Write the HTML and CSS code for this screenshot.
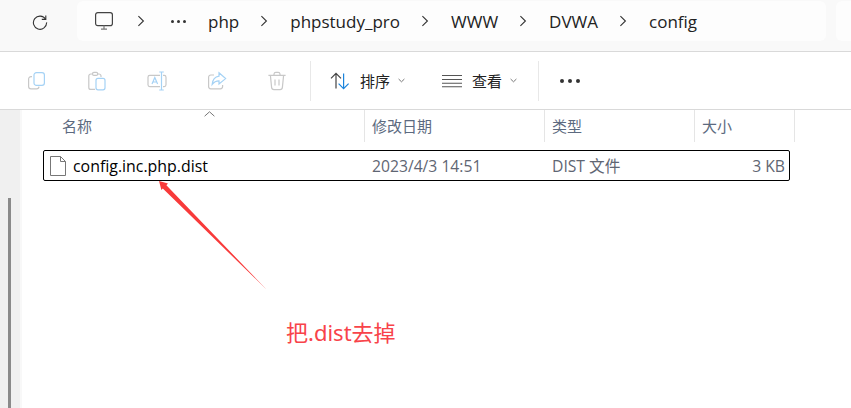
FILE: index.html
```html
<!DOCTYPE html>
<html lang="en">

<head>
    <meta charset="UTF-8">
    <meta name="viewport" content="width=device-width, initial-scale=1.0">
    <title>config</title>
    <link rel="stylesheet" href="styles.css">
</head>

<body>

    <div class="window">
        <div class="topbar">
            <div class="refresh">
                <svg width="16" height="16" viewBox="0 0 16 16" fill="none" stroke="#333" stroke-width="1.1">
                    <path d="M13.6 5.2A6.6 6.6 0 1 0 14.6 8.4"/>
                    <path d="M13.8 1.4V5.4H9.8"/>
                </svg>
            </div>
            <div class="address">
                <svg class="pc-icon" width="20" height="20" viewBox="0 0 20 20" fill="none" stroke="#444" stroke-width="1.2">
                    <rect x="1.6" y="1.6" width="16.8" height="13" rx="2.2"/>
                    <path d="M7 18.2H13M10 14.6V18.2" stroke="#777"/>
                </svg>
                <svg class="sep sep-first" width="8" height="12" viewBox="0 0 8 12" fill="none" stroke="#333" stroke-width="1.1"><path d="M1.4 1.2L6.4 6L1.4 10.8"/></svg>
                <div class="dots"><i></i><i></i><i></i></div>
                <span class="crumb">php</span>
                <svg class="sep" width="8" height="12" viewBox="0 0 8 12" fill="none" stroke="#333" stroke-width="1.1"><path d="M1.4 1.2L6.4 6L1.4 10.8"/></svg>
                <span class="crumb">phpstudy_pro</span>
                <svg class="sep" width="8" height="12" viewBox="0 0 8 12" fill="none" stroke="#333" stroke-width="1.1"><path d="M1.4 1.2L6.4 6L1.4 10.8"/></svg>
                <span class="crumb">WWW</span>
                <svg class="sep" width="8" height="12" viewBox="0 0 8 12" fill="none" stroke="#333" stroke-width="1.1"><path d="M1.4 1.2L6.4 6L1.4 10.8"/></svg>
                <span class="crumb">DVWA</span>
                <svg class="sep" width="8" height="12" viewBox="0 0 8 12" fill="none" stroke="#333" stroke-width="1.1"><path d="M1.4 1.2L6.4 6L1.4 10.8"/></svg>
                <span class="crumb">config</span>
            </div>
            <div class="search"></div>
        </div>

        <div class="toolbar">
            <div class="tool-icons">
                <svg width="20" height="20" viewBox="0 0 20 20" fill="none" stroke-width="1.2">
                    <path d="M5 5.6H4A2.4 2.4 0 0 0 1.6 8V15.4A2.4 2.4 0 0 0 4 17.8H9.6A2.4 2.4 0 0 0 12 15.6" stroke="#c8c8c8"/>
                    <rect x="7" y="1.6" width="10.4" height="12.8" rx="2.4" stroke="#a5d2f5"/>
                </svg>
                <svg width="20" height="20" viewBox="0 0 20 20" fill="none" stroke-width="1.2">
                    <path d="M6 3H3.8A2 2 0 0 0 1.8 5V16.4A2 2 0 0 0 3.8 18.4H8M14 6V5A2 2 0 0 0 12 3H10" stroke="#c8c8c8"/>
                    <rect x="5.6" y="1.4" width="5" height="3" rx="1.2" stroke="#c8c8c8"/>
                    <rect x="9" y="7.4" width="9" height="11.4" rx="2" stroke="#a5d2f5"/>
                </svg>
                <svg width="20" height="20" viewBox="0 0 20 20" fill="none" stroke-width="1.2">
                    <path d="M13 4.4H2.8A1.8 1.8 0 0 0 1 6.2V13.8A1.8 1.8 0 0 0 2.8 15.6H13M16 4.4H17.2A1.8 1.8 0 0 1 19 6.2V13.8A1.8 1.8 0 0 1 17.2 15.6H16" stroke="#c8c8c8"/>
                    <path d="M12.2 1H16.8M14.5 1V19M12.2 19H16.8M5 13L7.8 6.6L10.6 13M6 11H9.6" stroke="#a5d2f5"/>
                </svg>
                <svg width="20" height="20" viewBox="0 0 20 20" fill="none" stroke-width="1.2">
                    <path d="M7 4H3.8A2.2 2.2 0 0 0 1.6 6.2V15.6A2.2 2.2 0 0 0 3.8 17.8H13.4A2.2 2.2 0 0 0 15.6 15.6V14" stroke="#c8c8c8"/>
                    <path d="M12 1.8L18.6 7.6L12 13V9.8C9.4 9.8 7 10.8 5.2 13.4C5.6 9 8 5.8 12 5.2Z" stroke="#a5d2f5"/>
                </svg>
                <svg width="20" height="20" viewBox="0 0 20 20" fill="none" stroke="#c8c8c8" stroke-width="1.2">
                    <path d="M1.4 4.4H18.6M7 4.4V3A1.8 1.8 0 0 1 8.8 1.4H11.2A1.8 1.8 0 0 1 13 3V4.4"/>
                    <path d="M3.4 4.4L4.6 16.4A2.4 2.4 0 0 0 7 18.6H13A2.4 2.4 0 0 0 15.4 16.4L16.6 4.4"/>
                    <path d="M8 8.6V14.4M12 8.6V14.4"/>
                </svg>
            </div>
            <div class="divider"></div>
            <div class="tool-btn btn-sort">
                <svg width="20" height="18" viewBox="0 0 20 18" fill="none" stroke-width="1.2">
                    <path d="M6 16.4V1.6M1 6.4L6 1.4L11 6.4" stroke="#444"/>
                    <path d="M13.6 1.4V16.4M8.6 11.6L13.6 16.6L18.6 11.6" stroke="#1a84dc"/>
                </svg>
                <span class="tool-label">排序</span>
                <svg class="chev" width="7" height="5" viewBox="0 0 7 5" fill="none" stroke="#777"><path d="M.6 1L3.5 3.8L6.4 1"/></svg>
            </div>
            <div class="tool-btn btn-view">
                <svg width="20" height="14" viewBox="0 0 20 14" fill="none" stroke="#555" stroke-width="1.1">
                    <path d="M0 1.5H20M0 5.5H20M0 9.2H20M0 12.8H20"/>
                </svg>
                <span class="tool-label">查看</span>
                <svg class="chev" width="7" height="5" viewBox="0 0 7 5" fill="none" stroke="#777"><path d="M.6 1L3.5 3.8L6.4 1"/></svg>
            </div>
            <div class="divider divider-2"></div>
            <div class="more"><i></i><i></i><i></i></div>
        </div>

        <div class="content">
            <div class="sidebar">
                <div class="scroll-thumb"></div>
            </div>
            <div class="list">
                <div class="list-head">
                    <div class="col col-name">名称</div>
                    <div class="col col-date">修改日期</div>
                    <div class="col col-type">类型</div>
                    <div class="col col-size">大小</div>
                    <svg class="sort-mark" width="11" height="6" viewBox="0 0 11 6" fill="none" stroke="#777"><path d="M.6 5.2L5.5 .8L10.4 5.2"/></svg>
                </div>
                <div class="file-row">
                    <div class="cell-name">
                        <svg width="16" height="20" viewBox="0 0 16 20" fill="#fff" stroke="#777">
                            <path d="M.5 .5H10.5L15.5 5.5V19.5H.5Z"/>
                            <path d="M10.5 .5V5.5H15.5" fill="none"/>
                        </svg>
                        <span>config.inc.php.dist</span>
                    </div>
                    <div class="cell-date">2023/4/3 14:51</div>
                    <div class="cell-type">DIST 文件</div>
                    <div class="cell-size">3 KB</div>
                </div>
            </div>
        </div>

        <svg class="arrow" width="120" height="120" viewBox="0 0 120 120">
            <path d="M0 0L9 2.6L7.4 4.2L107.5 108.5L3.8 7.6L2.4 9Z" fill="#f83a3a"/>
        </svg>
        <div class="note">把.dist去掉</div>
    </div>

</body>

</html>
```

FILE: styles.css
```css
body {
    margin: 0;
    padding: 0;
    background-color: #ffffff;
    font-family: 'Open Sans', 'Noto Sans CJK SC', sans-serif;
    overflow: hidden;
}

.window {
    position: relative;
    display: flex;
    flex-direction: column;
    height: 408px;
}

/* address bar */
.topbar {
    display: flex;
    height: 52px;
    box-sizing: border-box;
    padding-top: 1px;
    background-color: #f9f9f9;
    border-bottom: 1px solid #d9d9d9;
}

.refresh {
    display: flex;
    justify-content: center;
    width: 77px;
    padding: 13px 0 0 2px;
    box-sizing: border-box;
}

.address {
    display: flex;
    align-items: center;
    width: 749px;
    height: 40px;
    padding-left: 17px;
    box-sizing: border-box;
    background-color: #fdfdfd;
    border-radius: 6px;
    color: #222;
    font-size: 17px;
}

.search {
    width: 15px;
    height: 40px;
    margin-left: 10px;
    background-color: #fdfdfd;
    border-radius: 6px 0 0 6px;
}

.sep {
    margin: 0 22px 0 21px;
}

.sep-first {
    margin: 0 26px 0 23px;
}

.dots {
    display: flex;
    gap: 3px;
    margin-right: 22px;
}

.dots i {
    width: 3px;
    height: 3px;
    border-radius: 50%;
    background-color: #333;
}

.crumb {
    white-space: nowrap;
}

/* command bar */
.toolbar {
    display: flex;
    align-items: center;
    height: 58px;
    box-sizing: border-box;
    background-color: #ffffff;
    border-bottom: 1px solid #d9d9d9;
}

.tool-icons {
    display: flex;
    gap: 40px;
    padding-left: 27px;
    margin-right: 23px;
}

.divider {
    width: 1px;
    height: 40px;
    background-color: #e8e8e8;
}

.tool-btn {
    display: flex;
    align-items: center;
}

.tool-label {
    margin: 0 8px 0 10px;
    font-size: 15px;
    color: #222;
}

.btn-sort {
    margin-left: 19px;
}

.btn-view {
    margin-left: 37px;
}

.divider-2 {
    margin-left: 21px;
}

.more {
    display: flex;
    gap: 4px;
    margin-left: 21px;
}

.more i {
    width: 4px;
    height: 4px;
    border-radius: 50%;
    background-color: #333;
}

/* file list */
.content {
    display: flex;
    flex: 1;
}

.sidebar {
    width: 20px;
    background-color: #f0f0f0;
    border-right: 2px solid #f8f8f8;
    padding-top: 88px;
}

.scroll-thumb {
    width: 3px;
    height: 210px;
    margin-left: 8px;
    background-color: #8a8a8a;
}

.list {
    flex: 1;
}

.list-head {
    position: relative;
    display: flex;
    height: 32px;
    padding-left: 20px;
    font-size: 15px;
    color: #5c6a80;
}

.col {
    box-sizing: border-box;
    padding: 5px 0 0 7px;
    border-right: 1px solid #e5e5e5;
}

.col-name {
    width: 323px;
    padding-left: 20px;
}

.col-date {
    width: 180px;
}

.col-type {
    width: 150px;
}

.col-size {
    width: 100px;
}

.sort-mark {
    position: absolute;
    left: 182px;
    top: 1px;
}

.file-row {
    display: flex;
    align-items: center;
    width: 747px;
    height: 31px;
    margin: 8px 0 0 21px;
    box-sizing: border-box;
    border: 1px solid #000000;
    border-radius: 2px;
    font-size: 15.7px;
    color: #5f6673;
}

.cell-name {
    display: flex;
    align-items: center;
    gap: 7px;
    width: 328px;
    padding-left: 6px;
    box-sizing: border-box;
    color: #000000;
    font-size: 15.9px;
}

.cell-date {
    width: 180px;
}

.cell-type {
    width: 150px;
}

.cell-size {
    width: 87px;
    padding-right: 4px;
    box-sizing: border-box;
    text-align: right;
}

/* annotation on top of the screenshot */
.arrow {
    position: absolute;
    left: 159px;
    top: 181px;
}

.note {
    position: absolute;
    left: 286px;
    top: 315px;
    font-size: 22px;
    color: #f8434a;
    font-family: 'Noto Sans', 'Noto Sans CJK SC', sans-serif;
}
```
